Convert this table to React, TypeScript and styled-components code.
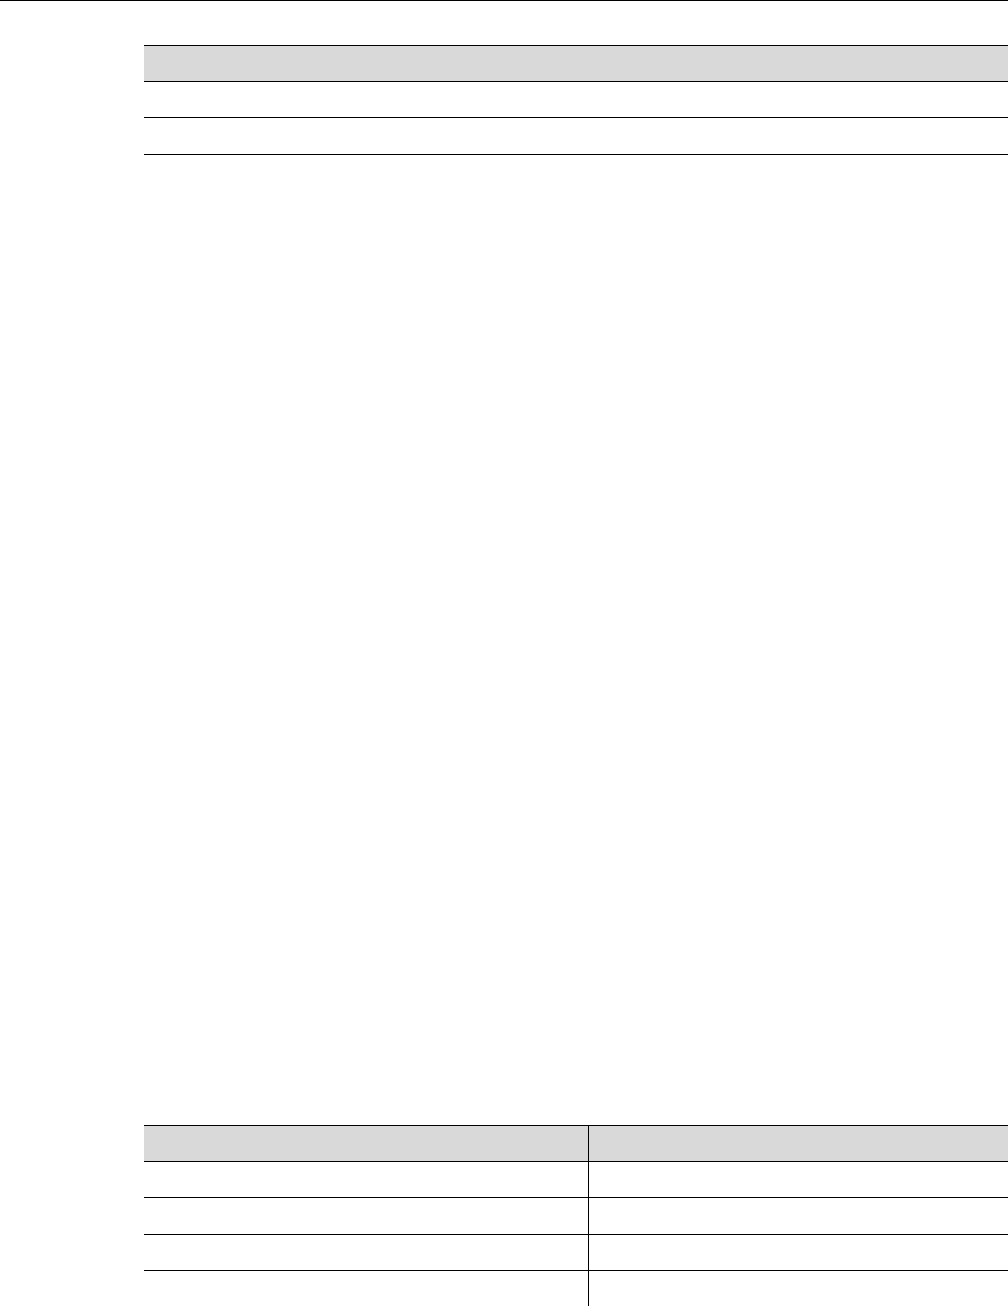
import React from "react";
import styled, { createGlobalStyle } from "styled-components";

const GlobalStyle = createGlobalStyle`
  html, body {
    margin: 0;
    padding: 0;
    background: #ffffff;
    overflow: hidden;
  }
  body {
    font-family: "Liberation Sans", Arial, sans-serif;
  }
`;

const Page = styled.div`
  width: 1008px;
  height: 1306px;
  border-top: 1px solid #000;
  box-sizing: border-box;
  overflow: hidden;
`;

const Sheet = styled.div`
  padding: 44px 0 0 144px;
  display: flex;
  flex-direction: column;
  gap: 970.4px;
`;

const Table = styled.div`
  width: 888px;
  border-top: 1px solid #000;
`;

// rows in the source are a touch over 36px, so the last one of the lower table runs off the page
const Row = styled.div<{ $cols: number; $head?: boolean }>`
  display: grid;
  grid-template-columns: repeat(${(p) => p.$cols}, 1fr);
  height: 36.2px;
  box-sizing: border-box;
  border-bottom: 1px solid #000;
  background: ${(p) => (p.$head ? "#d9d9d9" : "transparent")};
`;

const Cell = styled.div`
  font-size: 13px;
  color: #000;
  padding: 0 6px;
  & + & {
    border-left: 1px solid #000;
  }
`;

const SimpleTable = ({ cols, rows }: { cols: number; rows: number }) => (
  <Table>
    <Row $cols={cols} $head>
      {Array.from({ length: cols }).map((_, i) => (
        <Cell key={i} />
      ))}
    </Row>
    {Array.from({ length: rows }).map((_, r) => (
      <Row key={r} $cols={cols}>
        {Array.from({ length: cols }).map((_, i) => (
          <Cell key={i} />
        ))}
      </Row>
    ))}
  </Table>
);

export default function App() {
  return (
    <>
      <GlobalStyle />
      <Page>
        <Sheet>
          <SimpleTable cols={1} rows={2} />
          <SimpleTable cols={2} rows={4} />
        </Sheet>
      </Page>
    </>
  );
}
